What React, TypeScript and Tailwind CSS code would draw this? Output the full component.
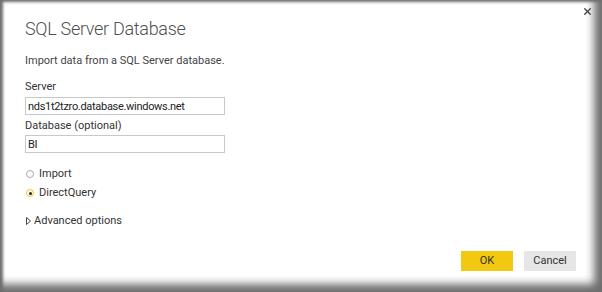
import { X } from 'lucide-react'

export default function App() {
  const lbl = 'text-[11px] leading-[16px] text-[#333]'
  const inp = 'w-[200px] h-[18px] border border-[#c8c8c8] px-[2px] text-[11px] tracking-[-0.3px] leading-[16px] text-[#222] outline-none'

  return (
    <div className="w-[602px] h-[292px] bg-white shadow-[inset_3px_2px_3px_#6e6e6e,inset_-9px_-9px_8px_-1px_#6e6e6e] relative font-['Roboto',sans-serif] overflow-hidden">
      {/* close */}
      <button className="absolute top-[6px] right-[9px] text-[#444]">
        <X size={11} strokeWidth={3} />
      </button>

      <div className="pl-[25px] pt-[16px] flex flex-col">
        <h1 className="text-[18px] leading-[26px] font-light tracking-[-0.3px] text-[#505050]">SQL Server Database</h1>
        <p className="mt-[11px] text-[11px] leading-[16px] text-[#444]">Import data from a SQL Server database.</p>

        <label className={`${lbl} mt-[10px]`}>Server</label>
        <input className={`${inp} mt-[2px]`} defaultValue="nds1t2tzro.database.windows.net" />

        <label className={`${lbl} mt-[3px]`}>Database (optional)</label>
        <input className={`${inp} mt-[1px]`} defaultValue="BI" />

        <div className="mt-[13px] flex flex-col gap-[3px]">
          <div className="flex items-center gap-[5px]">
            <span className="w-[8px] h-[8px] rounded-full border border-[#aaa] ml-[1px]" />
            <span className={lbl}>Import</span>
          </div>
          <div className="flex items-center gap-[5px]">
            <span className="w-[8px] h-[8px] rounded-full border border-[#f2c811] ml-[1px] flex items-center justify-center">
              <span className="w-[3px] h-[3px] rounded-full bg-[#222]" />
            </span>
            <span className={lbl}>DirectQuery</span>
          </div>
        </div>

        <div className="mt-[12px] flex items-center gap-[3px]">
          <svg width="5" height="8" viewBox="0 0 5 8" className="ml-[1px]">
            <path d="M0.5 0.5 L4.5 4 L0.5 7.5 Z" fill="none" stroke="#444" strokeWidth="1" />
          </svg>
          <span className={lbl}>Advanced options</span>
        </div>
      </div>

      <div className="absolute right-[26px] bottom-[21px] flex gap-[11px]">
        <button className="w-[52px] h-[20px] bg-[#f2c811] text-[11px] text-[#333]">OK</button>
        <button className="w-[52px] h-[20px] bg-[#e6e6e6] text-[11px] text-[#333]">Cancel</button>
      </div>
    </div>
  )
}
